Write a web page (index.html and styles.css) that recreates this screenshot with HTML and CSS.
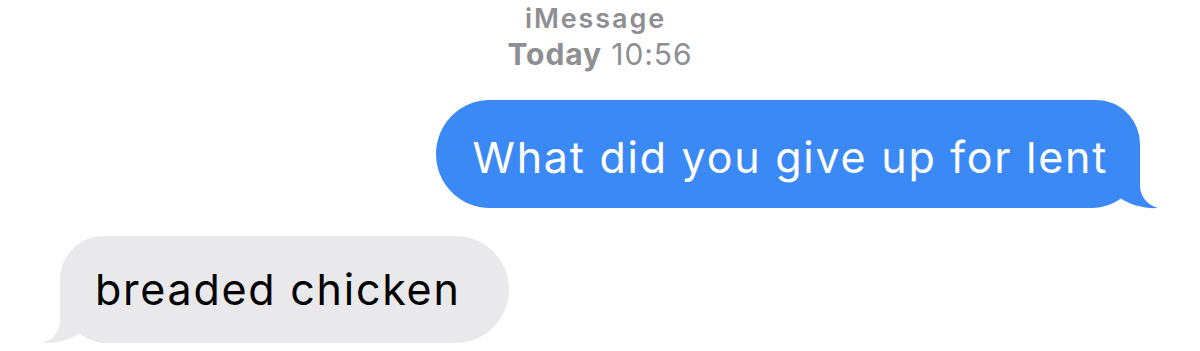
FILE: index.html
```html
<!DOCTYPE html>
<html>
<head>
<meta charset="utf-8">
<link rel="stylesheet" href="styles.css">
</head>
<body>
<div class="thread">
  <header class="meta">
    <div class="service">iMessage</div>
    <div class="stamp"><span class="day">Today</span> 10:56</div>
  </header>
  <div class="row sent">
    <div class="bubble blue">What did you give up for lent
      <svg class="tail tail-right" width="48" height="60" viewBox="0 0 48 60"><path d="M30 0 L30 38 C31 50 40 57 48 59 C36 60 20 56 10 49 L0 30 L0 0 Z" fill="#3b89f5"/></svg>
    </div>
  </div>
  <div class="row received">
    <div class="bubble gray">breaded chicken
      <svg class="tail tail-left" width="48" height="60" viewBox="0 0 48 60"><path d="M18 0 L18 38 C17 50 8 57 0 59 C12 60 28 56 38 49 L48 30 L48 0 Z" fill="#e9e9eb"/></svg>
    </div>
  </div>
</div>
</body>
</html>
```

FILE: styles.css
```css
html, body {
  margin: 0;
  padding: 0;
  background: #ffffff;
}
.thread {
  width: 1200px;
  font-family: "Inter", "Liberation Sans", sans-serif;
}
.meta {
  text-align: center;
  color: #8e8e93;
}
.service {
  font-weight: 600;
  font-size: 27px;
  line-height: 37px;
  letter-spacing: 1.9px;
  margin-left: -9px;
}
.stamp {
  font-weight: 400;
  font-size: 30px;
  line-height: 34px;
  letter-spacing: 0.9px;
}
.day {
  font-weight: 700;
}
.row {
  display: flex;
}
.row.sent {
  justify-content: flex-end;
  padding-right: 60px;
  margin-top: 29px;
}
.row.received {
  justify-content: flex-start;
  padding-left: 60px;
  margin-top: 28px;
}
.bubble {
  position: relative;
  font-size: 43px;
  letter-spacing: 1.75px;
  box-sizing: border-box;
}
.blue {
  background: #3b89f5;
  color: #ffffff;
  height: 108px;
  line-height: 102px;
  padding: 6px 32px 0 37px;
  border-radius: 54px 44px 48px 54px;
}
.gray {
  background: #e9e9eb;
  color: #000000;
  height: 107px;
  line-height: 107px;
  padding: 0 48px 0 35px;
  border-radius: 44px 54px 54px 48px;
}
.tail {
  position: absolute;
  bottom: -1px;
}
.tail-right {
  right: -18px;
}
.tail-left {
  left: -18px;
}
```
